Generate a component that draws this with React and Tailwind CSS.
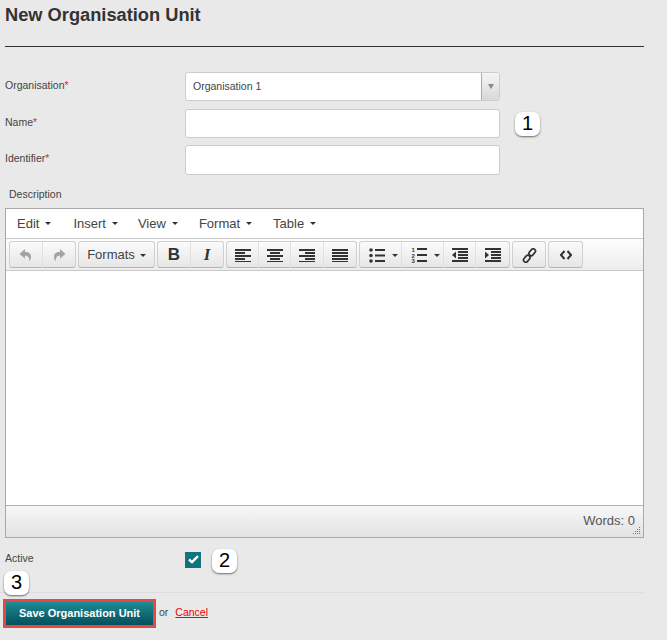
import React from 'react';

const Caret = ({ className = '' }) => (
  <span className={`inline-block w-0 h-0 border-x-[3px] border-x-transparent border-t-[3px] border-t-[#333] ${className}`} />
);

const Tool = ({ children, className = '' }) => (
  <div className={`h-[26px] flex items-center justify-center border-r border-[#e0e0e0] last:border-r-0 ${className}`}>{children}</div>
);

const Group = ({ children, className = '' }) => (
  <div className={`flex h-[27px] border border-[#d0d0d0] border-b-[#b4b4b4] rounded-[3px] bg-gradient-to-b from-[#fbfbfb] to-[#e6e6e6] ${className}`}>{children}</div>
);

// lines for the align buttons, [x, width] per row
const Lines = ({ rows }) => (
  <svg width="16" height="14" viewBox="0 0 16 14" fill="#333">
    {rows.map((r, i) => (
      <rect key={i} x={r[0]} y={i * 3 + 1} width={r[1]} height="2" />
    ))}
  </svg>
);

const Undo = ({ flip }) => (
  <svg width="14" height="14" viewBox="0 0 14 14" fill="#a3a3a3" className={flip ? '-scale-x-100' : ''}>
    <path d="M6 1 L0.5 6 L6 10.5 V7.5 C9 7.5 10.5 9.5 10.5 13.5 C13 9 13 3.8 6 4 Z" />
  </svg>
);

const Bullets = () => (
  <svg width="16" height="15" viewBox="0 0 16 15" fill="#333">
    <circle cx="2" cy="2" r="1.8" />
    <circle cx="2" cy="7.5" r="1.8" />
    <circle cx="2" cy="13" r="1.8" />
    <rect x="6" y="1" width="10" height="2" />
    <rect x="6" y="6.5" width="10" height="2" />
    <rect x="6" y="12" width="10" height="2" />
  </svg>
);

const Numbers = () => (
  <svg width="16" height="16" viewBox="0 0 16 16" fill="#333">
    <text x="0.5" y="5" fontSize="6" fontWeight="700" fontFamily="Liberation Sans, sans-serif">1</text>
    <text x="0.5" y="10.5" fontSize="6" fontWeight="700" fontFamily="Liberation Sans, sans-serif">2</text>
    <text x="0.5" y="16" fontSize="6" fontWeight="700" fontFamily="Liberation Sans, sans-serif">3</text>
    <rect x="6" y="1" width="10" height="2" />
    <rect x="6" y="7" width="10" height="2" />
    <rect x="6" y="13" width="10" height="2" />
  </svg>
);

const Indent = ({ out }) => (
  <svg width="16" height="14" viewBox="0 0 16 14" fill="#333">
    <rect x="0" y="0" width="16" height="2" />
    <rect x="6" y="3" width="10" height="2" />
    <rect x="6" y="6" width="10" height="2" />
    <rect x="6" y="9" width="10" height="2" />
    <rect x="0" y="12" width="16" height="2" />
    <path d={out ? 'M0 7 L4 3.5 V10.5 Z' : 'M4 7 L0 3.5 V10.5 Z'} />
  </svg>
);

const Link = () => (
  <svg width="15" height="15" viewBox="0 0 15 15" fill="none" stroke="#333" strokeWidth="1.7">
    <rect x="8" y="0.5" width="4.5" height="7.5" rx="2.2" transform="rotate(40 10.2 4.2)" />
    <rect x="2.5" y="7" width="4.5" height="7.5" rx="2.2" transform="rotate(40 4.8 10.8)" />
  </svg>
);

const Code = () => (
  <svg width="12" height="10" viewBox="0 0 12 10" fill="none" stroke="#333" strokeWidth="2">
    <path d="M4.5 1 L1 5 L4.5 9 M7.5 1 L11 5 L7.5 9" />
  </svg>
);

const Badge = ({ children, className = '' }) => (
  <div className={`w-[25px] h-[24px] pb-[2px] bg-white rounded-[7px] shadow-[0_1px_2px_rgba(0,0,0,0.55)] flex items-center justify-center text-[20px] leading-none text-black font-['Liberation_Sans',sans-serif] ${className}`}>
    {children}
  </div>
);

const Label = ({ children, required }) => (
  <label className="w-[180px] shrink-0 mb-[2px] text-[10.5px] text-[#444]">
    {children}
    {required && <span className="text-[#e8194f]">*</span>}
  </label>
);

const App = () => {
  return (
    <div className="relative w-[667px] h-[640px] overflow-hidden bg-[#e9e9e9] font-['Liberation_Sans',Arial,sans-serif] text-[#333]">
      <div className="pl-[5px] w-[644px]">
        <h1 className="pt-[4px] h-[47px] border-b border-[#333] text-[18.25px] leading-[21px] font-bold text-[#333]">New Organisation Unit</h1>

        <div className="flex items-center h-[29px] mt-[25px]">
          <Label required>Organisation</Label>
          <div className="flex w-[315px] h-[29px] bg-white border border-[#cccccc] rounded-[3px] overflow-hidden">
            <div className="flex-1 pl-[7px] text-[10.5px] leading-[27px] text-[#444]">Organisation 1</div>
            <div className="w-[18px] border-l border-[#aaa] bg-gradient-to-b from-[#f5f5f5] to-[#d8d8d8] flex items-center justify-center">
              <span className="w-0 h-0 border-x-[3.5px] border-x-transparent border-t-[5px] border-t-[#888]" />
            </div>
          </div>
        </div>

        <div className="flex items-center h-[29px] mt-[8px]">
          <Label required>Name</Label>
          <input className="w-[315px] h-[29px] bg-white border border-[#cccccc] rounded-[3px]" />
          <Badge className="ml-[15px]">1</Badge>
        </div>

        <div className="flex items-center h-[30px] mt-[7px]">
          <Label required>Identifier</Label>
          <input className="w-[315px] h-[30px] bg-white border border-[#cccccc] rounded-[3px]" />
        </div>

        <div className="pl-[4px] mt-[12px] h-[21px] text-[10.5px] leading-[14px] text-[#444]">Description</div>

        <div className="h-[330px] flex flex-col border border-[#a9a9a9] bg-white">
          <div className="h-[30px] flex items-center pl-[11px] gap-[21px] text-[13px] text-[#444] border-b border-[#c8c8c8]">
            <span className="flex items-center gap-[6px] mr-[1px]">Edit <Caret /></span>
            <span className="flex items-center gap-[6px] -mr-[1px]">Insert <Caret /></span>
            <span className="flex items-center gap-[6px]">View <Caret /></span>
            <span className="flex items-center gap-[6px]">Format <Caret /></span>
            <span className="flex items-center gap-[6px]">Table <Caret /></span>
          </div>
          <div className="h-[32px] flex items-center pl-[3px] gap-[2px] border-b border-[#c8c8c8] bg-gradient-to-b from-[#fdfdfd] to-[#ededed]">
            <Group>
              <Tool className="w-[33px]"><Undo /></Tool>
              <Tool className="w-[32px]"><Undo flip /></Tool>
            </Group>
            <Group>
              <Tool className="w-[75px] gap-[5px] text-[13px] text-[#444]">Formats <Caret /></Tool>
            </Group>
            <Group>
              <Tool className="w-[33px] text-[17px] font-bold text-[#333]">B</Tool>
              <Tool className="w-[32px] text-[17px] font-bold italic font-['Liberation_Serif',serif] text-[#333]">I</Tool>
            </Group>
            <Group>
              <Tool className="w-[32px]"><Lines rows={[[0, 16], [0, 10], [0, 16], [0, 10], [0, 16]]} /></Tool>
              <Tool className="w-[32px]"><Lines rows={[[0, 16], [3, 10], [0, 16], [3, 10], [0, 16]]} /></Tool>
              <Tool className="w-[33px]"><Lines rows={[[0, 16], [6, 10], [0, 16], [6, 10], [0, 16]]} /></Tool>
              <Tool className="w-[32px]"><Lines rows={[[0, 16], [0, 16], [0, 16], [0, 16], [0, 16]]} /></Tool>
            </Group>
            <Group>
              <Tool className="w-[42px] gap-[7px] pl-[5px]"><Bullets /><Caret /></Tool>
              <Tool className="w-[42px] gap-[7px] pl-[5px]"><Numbers /><Caret /></Tool>
              <Tool className="w-[32px]"><Indent out /></Tool>
              <Tool className="w-[33px]"><Indent /></Tool>
            </Group>
            <Group>
              <Tool className="w-[32px]"><Link /></Tool>
            </Group>
            <Group>
              <Tool className="w-[33px]"><Code /></Tool>
            </Group>
          </div>
          <div className="flex-1 bg-white" />
          <div className="relative h-[32px] border-t border-[#b0b0b0] bg-gradient-to-b from-[#f8f8f8] to-[#e2e2e2] flex items-center justify-end pr-[8px] pb-[2px] text-[13px] text-[#555]">
            Words: 0
            <svg width="9" height="9" viewBox="0 0 9 9" fill="#777" className="absolute right-[2px] bottom-[2px]">
              <rect x="7" y="1" width="1" height="1" />
              <rect x="5" y="3" width="1" height="1" />
              <rect x="7" y="3" width="1" height="1" />
              <rect x="3" y="5" width="1" height="1" />
              <rect x="5" y="5" width="1" height="1" />
              <rect x="7" y="5" width="1" height="1" />
              <rect x="1" y="7" width="1" height="1" />
              <rect x="3" y="7" width="1" height="1" />
              <rect x="5" y="7" width="1" height="1" />
              <rect x="7" y="7" width="1" height="1" />
            </svg>
          </div>
        </div>

        <div className="flex items-center h-[25px] mt-[10px]">
          <label className="w-[180px] shrink-0 mb-[3px] text-[10.5px] text-[#444]">Active</label>
          <div className="w-[16px] h-[16px] mb-[2px] bg-[#0e7480] flex items-center justify-center">
            <svg width="11" height="9" viewBox="0 0 11 9" fill="none" stroke="#fff" strokeWidth="2.4">
              <path d="M1 4.5 L4 7.2 L10 1.2" />
            </svg>
          </div>
          <Badge className="ml-[11px] mt-[1px]">2</Badge>
        </div>

        <div className="mt-[19px] w-[644px] -ml-[5px] border-t border-[#dedede]" />

        <div className="flex items-center mt-[6px] -ml-[2px]">
          <button className="w-[153px] h-[29px] border-[3px] border-[#e04a44] bg-gradient-to-b from-[#1f8b96] to-[#04505c] text-white text-[11px] font-bold">
            Save Organisation Unit
          </button>
          <span className="ml-[3px] mb-[1px] text-[10.5px] text-[#444]">or</span>
          <a className="ml-[7px] mb-[1px] text-[10.5px] text-[#f00000] underline">Cancel</a>
        </div>
      </div>

      <Badge className="absolute left-[4px] top-[571px]">3</Badge>
    </div>
  );
};

export default App;
